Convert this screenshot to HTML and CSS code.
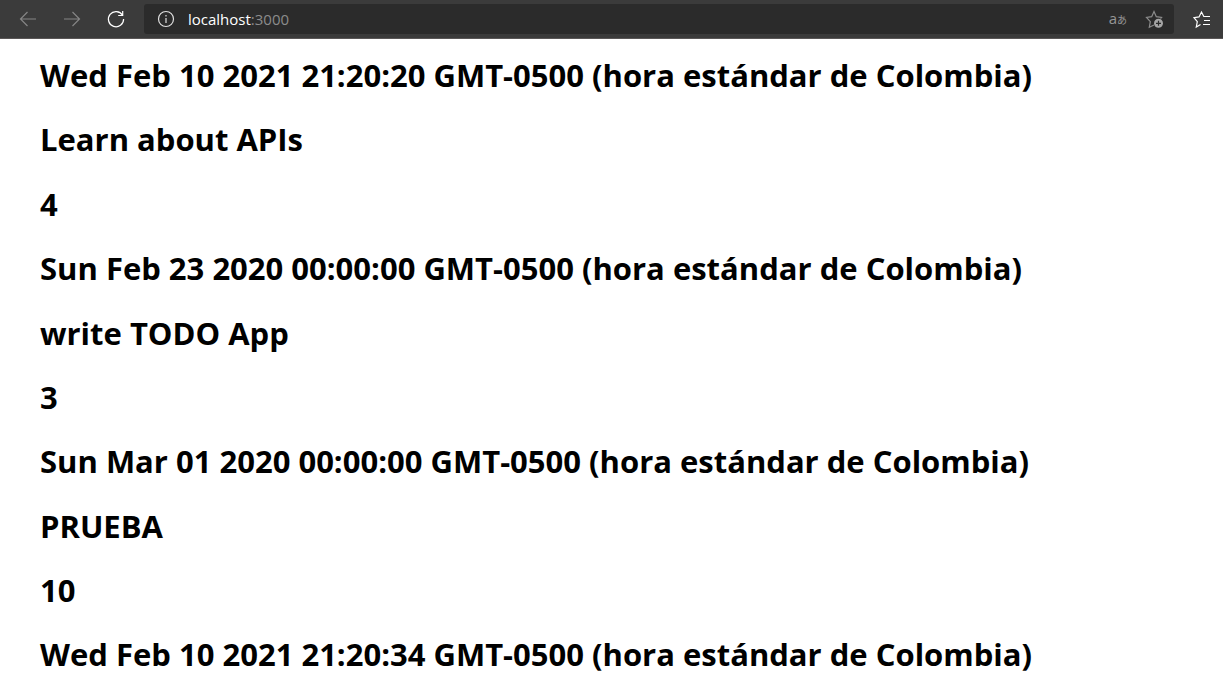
FILE: index.html
```html
<!DOCTYPE html>
<html lang="es">
<head>
<meta charset="utf-8">
<title>localhost:3000</title>
<link rel="stylesheet" href="styles.css">
</head>
<body>
<header class="toolbar">
  <nav class="nav">
    <button class="icon-button dim" aria-label="Back"><svg width="20" height="20" viewBox="0 0 20 20"><path d="M18 10H2.5M9.500 3L2.500 10l7 7"/></svg></button>
    <button class="icon-button dim" aria-label="Forward"><svg width="20" height="20" viewBox="0 0 20 20"><path d="M2 10h15.500M10.500 3l7 7-7 7"/></svg></button>
    <button class="icon-button" aria-label="Refresh"><svg width="20" height="20" viewBox="0 0 20 20"><path d="M16.500 6.200A7.600 7.600 0 1 0 17.600 10M16.700 2v4.500h-4.500"/></svg></button>
  </nav>
  <div class="address">
    <button class="icon-button info" aria-label="Site information"><svg width="20" height="20" viewBox="0 0 20 20"><circle cx="10" cy="10" r="7.500"/><path d="M10 9v5M10 6v1.500"/></svg></button>
    <a class="url" href="#">localhost<span class="port">:3000</span></a>
    <button class="translate" aria-label="Translate"><span>a</span><span class="kana">あ</span></button>
    <button class="icon-button muted" aria-label="Add to favorites"><svg width="20" height="20" viewBox="0 0 20 20"><path d="M9 16l-4.700 2.300 1-5.600L1.500 8.500l5.200-.8L9 2.500l2.300 5.200 5.200.8-1 1"/><circle class="badge" cx="13.500" cy="14.300" r="4.500"/><path class="plus" d="M13.500 11.800v5M11 14.300h5"/></svg></button>
  </div>
  <button class="icon-button favorites" aria-label="Favorites"><svg width="20" height="20" viewBox="0 0 20 20"><path d="M8.500 15.500L4.300 18l1-5.400L2 8.700l5-.8 2.500-4.900 2.300 4.500H18M12 11.500h6M11 15.500h7"/></svg></button>
</header>
<main class="page">
  <h1>Wed Feb 10 2021 21:20:20 GMT-0500 (hora estándar de Colombia)</h1>
  <h1>Learn about APIs</h1>
  <h1>4</h1>
  <h1>Sun Feb 23 2020 00:00:00 GMT-0500 (hora estándar de Colombia)</h1>
  <h1>write TODO App</h1>
  <h1>3</h1>
  <h1>Sun Mar 01 2020 00:00:00 GMT-0500 (hora estándar de Colombia)</h1>
  <h1>PRUEBA</h1>
  <h1>10</h1>
  <h1>Wed Feb 10 2021 21:20:34 GMT-0500 (hora estándar de Colombia)</h1>
</main>
</body>
</html>
```

FILE: styles.css
```css
* {
  box-sizing: border-box;
}

body {
  display: flex;
  flex-direction: column;
  height: 100vh;
  margin: 0;
  background: #fff;
  color: #000;
  font-family: "Segoe UI", "Open Sans", "Noto Sans", sans-serif;
}

.toolbar {
  display: flex;
  flex: none;
  align-items: center;
  padding: 4px 11px 4px 18px;
  background: #3b3b3b;
  border-bottom: 1px solid #5a5757;
}

.nav {
  display: flex;
  gap: 24px;
  margin-right: 18px;
}

.icon-button,
.translate {
  display: flex;
  flex: none;
  padding: 0;
  border: 0;
  background: none;
  color: #fff;
}

.icon-button svg {
  fill: none;
  stroke: currentColor;
  stroke-width: 1.2;
}

.icon-button.dim {
  color: #858585;
}

.icon-button.info {
  color: #dedede;
}

.icon-button.muted {
  color: #8c8c8c;
}

.address {
  display: flex;
  flex: 1;
  align-items: center;
  height: 30px;
  padding: 0 9px 0 12px;
  border-radius: 3px;
  background: #2b2b2b;
}

.url {
  flex: 1;
  margin-left: 12px;
  color: #fff;
  font-size: 15px;
  line-height: 20px;
  text-decoration: none;
}

.port {
  color: #8c8c8c;
}

.translate {
  align-items: baseline;
  margin-right: 18px;
  color: #969696;
  font-family: "Open Sans", "Noto Sans CJK JP", sans-serif;
  font-size: 15px;
  line-height: 18px;
}

.kana {
  font-size: 10px;
}

.badge {
  fill: #a5a5a5;
  stroke: none;
}

.plus {
  stroke: #2b2b2b;
}

.favorites {
  margin-left: 18px;
}

.page {
  flex: 1;
  min-height: 0;
  overflow: hidden;
  padding: 15px 40px 0;
}

.page h1 {
  margin: 0.69em 0;
  font-size: 31px;
  font-weight: 700;
  line-height: 43px;
}

.page h1:first-child {
  margin-top: 0;
}
```
